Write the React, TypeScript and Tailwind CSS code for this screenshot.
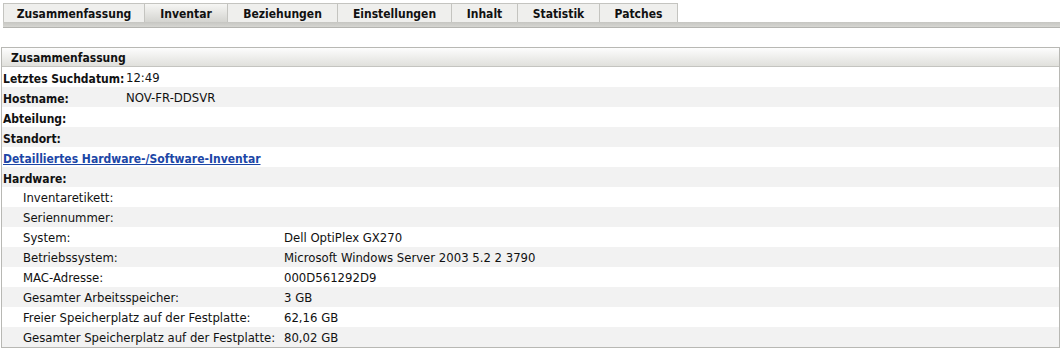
import React from "react";

const tabs = [
  { name: "Zusammenfassung", w: "w-[142px]" },
  { name: "Inventar", w: "w-[83px]" },
  { name: "Beziehungen", w: "w-[110px]" },
  { name: "Einstellungen", w: "w-[114px]" },
  { name: "Inhalt", w: "w-[66px]" },
  { name: "Statistik", w: "w-[82px]" },
  { name: "Patches", w: "w-[78px]" },
];

const top = [
  { label: "Letztes Suchdatum:", value: "12:49" },
  { label: "Hostname:", value: "NOV-FR-DDSVR" },
  { label: "Abteilung:", value: "" },
  { label: "Standort:", value: "" },
];

const hardware = [
  { label: "Inventaretikett:", value: "" },
  { label: "Seriennummer:", value: "" },
  { label: "System:", value: "Dell OptiPlex GX270" },
  { label: "Betriebssystem:", value: "Microsoft Windows Server 2003 5.2 2 3790" },
  { label: "MAC-Adresse:", value: "000D561292D9" },
  { label: "Gesamter Arbeitsspeicher:", value: "3 GB" },
  { label: "Freier Speicherplatz auf der Festplatte:", value: "62,16 GB" },
  { label: "Gesamter Speicherplatz auf der Festplatte:", value: "80,02 GB" },
];

const bold = "font-['DejaVu_Sans_Condensed','DejaVu_Sans',sans-serif] font-bold text-[12px]";
const row = "h-[20px] pt-[4px] flex items-center whitespace-nowrap";

const App = () => {
  return (
    <div className="w-[1062px] h-[350px] bg-white text-[11.7px] text-[#111] font-['DejaVu_Sans',sans-serif] overflow-hidden">
      {/* Tabs */}
      <div className="pt-[3px] pl-[3px] pr-[2px]">
        <div className="flex h-[19px]">
          {tabs.map((t) => (
            <div
              key={t.name}
              className={`${t.w} ${bold} pt-[2px] flex items-center justify-center border-t border-r border-[#c4c4c0] first:border-l ${
                t.name === "Inventar"
                  ? "bg-gradient-to-b from-[#f6f6f4] to-[#d4d4d0]"
                  : "bg-[#efefed]"
              }`}
            >
              {t.name}
            </div>
          ))}
        </div>
        <div className="h-[6px] bg-gradient-to-b from-[#c6c6c2] to-[#d6d6d2] border-b border-[#b4b4b0]" />
      </div>

      {/* Panel */}
      <div className="mt-[19px] ml-[1px] mr-[2px] border border-[#b8b8b4]">
        <div className={`h-[19px] pl-[9px] pt-[2px] flex items-center ${bold} bg-gradient-to-b from-[#fdfdfd] to-[#e0e0dc] border-b border-[#c4c4c0]`}>
          Zusammenfassung
        </div>
        <div className="grid grid-cols-[122px_1fr]">
          {top.map((r, i) => (
            <React.Fragment key={r.label}>
              <div className={`${row} pl-[1px] ${bold} ${i % 2 ? "bg-[#f2f2f2]" : ""}`}>{r.label}</div>
              <div className={`${row} pl-[2px] ${i % 2 ? "bg-[#f2f2f2]" : ""}`}>{r.value}</div>
            </React.Fragment>
          ))}
        </div>
        <div className={`${row} pl-[1px]`}>
          <a href="#" className={`${bold} text-[#1c46a6] underline`}>
            Detailliertes Hardware-/Software-Inventar
          </a>
        </div>
        <div className={`${row} pl-[1px] ${bold} bg-[#f2f2f2]`}>Hardware:</div>
        <div className="grid grid-cols-[282px_1fr]">
          {hardware.map((r, i) => (
            <React.Fragment key={r.label}>
              <div className={`${row} pl-[21px] ${i % 2 ? "bg-[#f2f2f2]" : ""}`}>{r.label}</div>
              <div className={`${row} ${i % 2 ? "bg-[#f2f2f2]" : ""}`}>{r.value}</div>
            </React.Fragment>
          ))}
        </div>
      </div>
    </div>
  );
};

export default App;
